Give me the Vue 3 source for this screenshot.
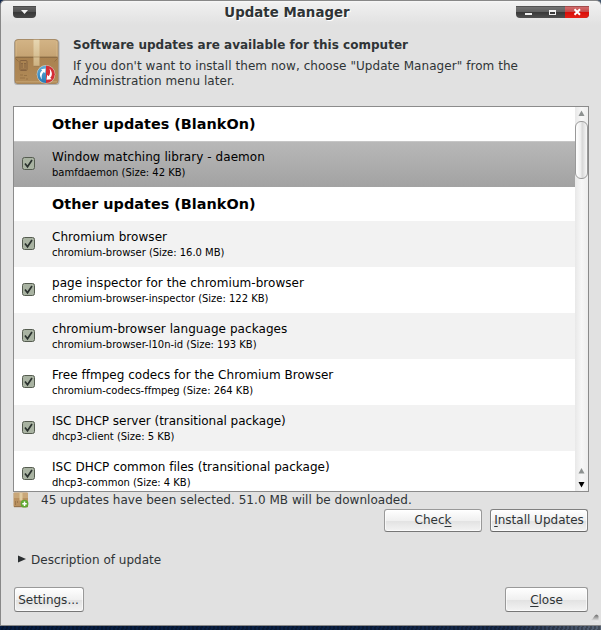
<script setup>
const rows = [
  { heading: 'Other updates (BlankOn)' },
  { name: 'Window matching library - daemon', detail: 'bamfdaemon (Size: 42 KB)', selected: true, spacing: 0.06 },
  { heading: 'Other updates (BlankOn)' },
  { name: 'Chromium browser', detail: 'chromium-browser (Size: 16.0 MB)', shade: true, spacing: 0.06 },
  { name: 'page inspector for the chromium-browser', detail: 'chromium-browser-inspector (Size: 122 KB)', spacing: 0.05 },
  { name: 'chromium-browser language packages', detail: 'chromium-browser-l10n-id (Size: 193 KB)', shade: true, spacing: 0.06 },
  { name: 'Free ffmpeg codecs for the Chromium Browser', detail: 'chromium-codecs-ffmpeg (Size: 264 KB)', spacing: 0.03 },
  { name: 'ISC DHCP server (transitional package)', detail: 'dhcp3-client (Size: 5 KB)', shade: true, spacing: -0.02 },
  { name: 'ISC DHCP common files (transitional package)', detail: 'dhcp3-common (Size: 4 KB)', spacing: 0.01 },
]
</script>

<template>
  <div class="desktop">
    <div class="window">
      <header class="titlebar">
        <div class="menu-btn">
          <svg width="23" height="12" viewBox="0 0 23 12"><path d="M8 4h7l-3.5 4z" fill="#f2f2f2" /></svg>
        </div>
        <h1>Update Manager</h1>
        <div class="controls">
          <span class="ctl"><svg width="24" height="12"><rect x="9" y="7" width="7" height="2" fill="#f0f0f0" /></svg></span>
          <span class="ctl"><svg width="25" height="12"><path d="M9 4h7v5H9zM10 6v2h5V6z" fill="#f0f0f0" fill-rule="evenodd" /></svg></span>
          <span class="ctl close"><svg width="24" height="12"><path d="M9.500 3.200l5.500 5.600M15 3.200l-5.500 5.600" stroke="#fff" stroke-width="2" fill="none" /></svg></span>
        </div>
      </header>

      <section class="intro">
        <svg class="package" width="48" height="48" viewBox="0 0 48 48">
          <defs>
            <linearGradient id="flap" x2="0" y2="1"><stop stop-color="#d3b486" /><stop offset="1" stop-color="#b08955" /></linearGradient>
            <linearGradient id="front" x2="0" y2="1"><stop stop-color="#a98250" /><stop offset="1" stop-color="#b18a57" /></linearGradient>
            <linearGradient id="tape" x2="0" y2="1"><stop stop-color="#e7d6b1" /><stop offset="1" stop-color="#cdb282" /></linearGradient>
            <linearGradient id="blue" x2="0" y2="1"><stop stop-color="#65afd8" /><stop offset="1" stop-color="#2378b5" /></linearGradient>
          </defs>
          <rect x="1" y="1.500" width="45.500" height="45.500" rx="3.500" fill="#666" opacity=".4" />
          <rect x="2" y="1.500" width="43" height="44" rx="3" fill="url(#flap)" stroke="#96774e" stroke-width=".7" />
          <path d="M2 19.500h43v23q0 3-3 3H5q-3 0-3-3z" fill="url(#front)" />
          <path d="M3 3v16M44 3v16" stroke="#dfc497" opacity=".6" />
          <path d="M2.500 19.200h42" stroke="#7c5d38" />
          <path d="M2.500 20.500l3 3M44.500 20.500l-3 3" stroke="#7c5d38" opacity=".5" />
          <path d="M3 43.800h41" stroke="#c7a473" />
          <path d="M20.500 1.800h6v26.500h-6z" fill="url(#tape)" />
          <path d="M20.500 28.300h6" stroke="#8f7048" stroke-width=".7" />
          <path d="M20.500 19h6" stroke="#a68a60" stroke-width=".8" />
          <g stroke="#79583a" fill="none" opacity=".75">
            <rect x="7" y="22.500" width="7" height="10" rx="1" />
            <path d="M9 25v5M12 25v5M8 31.200h5M8.200 25.500h1.600M11.200 25.500h1.600" />
          </g>
          <path d="M7 37h3M11 37.500h3M7 40h5M13 41h2" stroke="#8d6b41" opacity=".7" />
          <circle cx="33" cy="36.300" r="9.300" fill="#d9cfc4" />
          <path d="M33 27.500a8.800 8.800 0 0 0 0 17.600z" fill="url(#blue)" />
          <path d="M33 27.500a8.800 8.800 0 0 1 0 17.600z" fill="#d42e36" />
          <path d="M29 41.500c-3-4-2.500-7 .2-9L28 31.200l4.600-.7-.4 4.700-1.400-1.300c-2.200 2-2.600 4.300-1.800 7.600z" fill="#fff" />
          <path d="M36.500 30.500c3.200 3.600 3 7 .7 9.300l1.500 1.400-5.200.6.700-5 1.400 1.400c1.700-2 1.900-4.300.9-7.700z" fill="#fff" />
        </svg>
        <div class="intro-text">
          <h2>Software updates are available for this computer</h2>
          <p>If you don't want to install them now, choose "Update Manager" from the<br />Administration menu later.</p>
        </div>
      </section>

      <section class="list">
        <div class="rows">
          <div v-for="(r, i) in rows" :key="i" :class="['row', { heading: r.heading, selected: r.selected, shade: r.shade }]">
            <template v-if="r.heading">{{ r.heading }}</template>
            <template v-else>
              <span class="check">
                <svg width="13" height="13" viewBox="0 0 13 13">
                  <rect x=".5" y=".5" width="12" height="12" rx="2" fill="#a9b3a2" stroke="#555c50" />
                  <path d="M3 6.500l2.500 3.200L10 3" stroke="#2a312e" stroke-width="1.700" fill="none" />
                </svg>
              </span>
              <span class="labels">
                <span class="name" :style="{ letterSpacing: r.spacing + 'px' }">{{ r.name }}</span>
                <span class="detail">{{ r.detail }}</span>
              </span>
            </template>
          </div>
        </div>
        <div class="scroll">
          <svg width="13" height="14"><path d="M6.500 3.500l3 5.500h-6z" fill="#8d9190" /></svg>
          <div class="thumb"></div>
          <svg class="up" width="13" height="14"><path d="M6.500 5l3 5.500h-6z" fill="#8d9190" /></svg>
          <svg width="13" height="14"><path d="M3.500 5h6l-3 5.500z" fill="#000" /></svg>
        </div>
      </section>

      <div class="status">
        <svg width="16" height="16" viewBox="0 0 16 16">
          <rect x=".5" y=".5" width="14.500" height="14.500" rx="1" fill="#b99160" />
          <path d="M1 1h14v5H1z" fill="#c9a779" />
          <path d="M6.500 1h3v7.500h-3z" fill="#e0ca9f" />
          <path d="M2.500 9v4M4.500 9v2" stroke="#8b6941" opacity=".6" />
          <path d="M1 14.700h14" stroke="#8e6e48" />
          <circle cx="11.500" cy="11.700" r="3.900" fill="#60a831" />
          <path d="M11.500 9.500v4.400M9.300 11.700h4.400" stroke="#fff" stroke-width="1.500" />
        </svg>
        <span>45 updates have been selected. 51.0 MB will be downloaded.</span>
      </div>

      <div class="actions">
        <button class="btn"><span>Chec<u>k</u></span></button>
        <button class="btn focus"><span><u>I</u>nstall Updates</span></button>
      </div>

      <div class="expander">
        <svg width="8" height="8"><path d="M0 .5v7L8 4z" fill="#2b2f31" /></svg>
        <span>Description of update</span>
      </div>

      <footer>
        <button class="btn settings"><span>Settings...</span></button>
        <button class="btn end"><span><u>C</u>lose</span></button>
      </footer>
      <svg class="grip" width="12" height="11" viewBox="0 0 12 11">
        <defs><linearGradient id="gripfill" x2="0" y2="1"><stop offset=".1" stop-color="#777" /><stop offset=".8" stop-color="#e8e8e8" /></linearGradient></defs>
        <path d="M1 8Q3.500 6.500 5.500 3Q7.500 0 9.500 3v6.500Q5 7.500 1 8z" fill="url(#gripfill)" />
      </svg>
    </div>
    <div class="backdrop"></div>
  </div>
</template>

<style>
body { margin: 0; overflow: hidden; }
</style>

<style scoped>
* { box-sizing: border-box; }
.desktop {
  width: 601px; height: 630px; display: flex; flex-direction: column;
  background: linear-gradient(90deg, #142a4e, #42556c);
  font: 12px/15px "DejaVu Sans", sans-serif; color: #2f3436; overflow: hidden;
}
.window {
  position: relative; height: 626px; display: flex; flex-direction: column;
  border: 1px solid #888; border-right: 0; border-radius: 5px 5px 0 0;
  padding: 0 12px;
  background: linear-gradient(#f8f8f8 0, #f0f0f0 2px, #e1e1e1 24px);
}
.backdrop {
  height: 4px;
  background: repeating-linear-gradient(105deg, transparent 0 2px, rgba(0,0,0,.25) 2px 4px), linear-gradient(90deg, #061c40, #0b2144 60%, #1a2c4c 85%, #566273);
}
.titlebar { height: 36px; display: grid; grid-template-columns: 45px 1fr 73px; align-items: start; padding: 5px 0 0; }
.menu-btn { width: 23px; height: 12px; border-radius: 0 0 4px 4px; background: linear-gradient(#333 0, #656565 1px, #505050 6px, #373737 6px, #484848); }
svg { display: block; }
h1 { margin: -1px 0 0; font-size: 13.330px; line-height: 16px; letter-spacing: .04px; text-align: center; text-shadow: 1px 1px #fff; }
.controls { display: flex; height: 12px; border-radius: 0 0 4px 4px; overflow: hidden; background: linear-gradient(#333 0, #747474 1px, #606060 6px, #383838 6px, #505050); }
.ctl { height: 12px; }
.close { background: linear-gradient(#702c2c 0, #d26b6b 1px, #c74848 6px, #d80c07 6px, #e52218); }
.intro { height: 69px; display: flex; gap: 12px; }
.package { flex: none; margin: 1px 0 0; }
.intro-text { white-space: nowrap; padding-top: 1px; }
h2 { margin: 0 0 6px; font-size: 12px; line-height: 15px; letter-spacing: .02px; }
p { margin: 0; letter-spacing: .06px; }
.list { flex: none; height: 386px; display: flex; border: 1px solid #8b8b8b; background: #fff; color: #000; }
.rows { flex: 1; overflow: hidden; white-space: nowrap; }
.row { height: 46px; display: flex; padding-left: 8px; }
.row.heading { height: 34px; padding-left: 38px; font-size: 14.400px; line-height: 34px; font-weight: bold; letter-spacing: .02px; }
.selected { background: linear-gradient(#b8b8b8, #a2a2a2); border-top: 1px solid #c6c6c6; }
.selected .check { padding-top: 15px; }
.selected .labels { padding-top: 7px; }
.shade { background: #f2f2f2; }
.check { width: 30px; padding-top: 16px; }
.labels { display: flex; flex-direction: column; padding-top: 8px; }
.name { line-height: 16px; }
.detail { font-size: 10px; line-height: 15px; letter-spacing: -.02px; }
.scroll { width: 13px; display: flex; flex-direction: column; background: linear-gradient(90deg, #e8e8e8, #f7f7f7 50%, #eee); }
.thumb { height: 58px; border: 1px solid #999; border-radius: 6px; background: linear-gradient(90deg, #fcfcfc 10%, #ededed 45%, #d7d7d7 55%, #f8f8f8); }
.up { margin-top: auto; }
.status { height: 17px; display: flex; gap: 12px; line-height: 16px; letter-spacing: .03px; }
.actions { height: 23px; display: flex; justify-content: flex-end; gap: 8px; padding-right: 1px; }
.btn {
  width: 98px; height: 23px; padding: 0; font: inherit; color: inherit; white-space: nowrap;
  border: 1px solid #999; border-bottom-color: #777; border-radius: 3px;
  background: linear-gradient(#fff, #f0f0f0 50%, #e2e2e2 52%, #f3f3f3);
  box-shadow: inset 0 0 0 1px rgba(255,255,255,.65);
}
.focus { border-color: #808080; border-bottom-color: #686868; }
.expander { display: flex; align-items: center; gap: 5px; height: 55px; padding: 0 0 0 5px; }
.expander span { padding-top: 2px; letter-spacing: .02px; }
.expander svg { margin-top: -2px; }
footer { display: flex; justify-content: space-between; padding: 0 1px; }
footer .btn { height: 25px; padding-top: 2px; }
footer .settings { width: 70px; padding-right: 1px; }
footer .end { width: 83px; }
u { text-decoration: underline; text-underline-offset: 2px; text-decoration-thickness: 1px; }
.grip { position: absolute; right: 0; bottom: 1px; }
</style>
